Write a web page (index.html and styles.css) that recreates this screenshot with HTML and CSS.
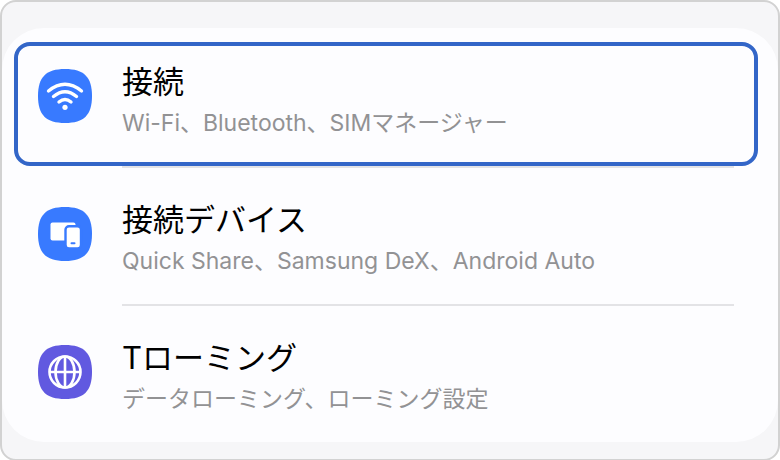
FILE: index.html
```html
<!DOCTYPE html>
<html lang="ja">
<head>
  <meta charset="UTF-8">
  <meta name="viewport" content="width=device-width, initial-scale=1.0">
  <title>設定</title>
  <link rel="stylesheet" href="styles.css">
</head>
<body>
  <main class="screen">
    <ul class="settings">
      <li class="selected">
        <a class="item" href="#connections">
          <svg class="icon" viewBox="0 0 54 54" aria-hidden="true">
            <path fill="#387aff" d="M27 0C46 0 54 8 54 27S46 54 27 54 0 46 0 27 8 0 27 0Z"/>
            <g fill="none" stroke="#fff" stroke-width="3.4" stroke-linecap="round">
              <path d="M10.5 22Q27 8.5 43.5 22"/>
              <path d="M15.5 27.5Q27 18 38.5 27.5"/>
              <path d="M21 33Q27 28 33 33"/>
            </g>
            <circle cx="27" cy="38.3" r="2.6" fill="#fff"/>
          </svg>
          <span class="text">
            <span class="title">接続</span>
            <span class="summary">Wi-Fi、Bluetooth、SIMマネージャー</span>
          </span>
        </a>
      </li>
      <li>
        <a class="item" href="#devices">
          <svg class="icon" viewBox="0 0 54 54" aria-hidden="true">
            <path fill="#387aff" d="M27 0C46 0 54 8 54 27S46 54 27 54 0 46 0 27 8 0 27 0Z"/>
            <rect x="12.5" y="15.5" width="25" height="18" rx="2" fill="#fff"/>
            <rect x="27.5" y="19.2" width="15.5" height="22.3" rx="3.5" fill="#fff" stroke="#387aff" stroke-width="2.4"/>
            <path d="M33.5 36.2h3" stroke="#387aff" stroke-width="2" stroke-linecap="round"/>
          </svg>
          <span class="text">
            <span class="title">接続デバイス</span>
            <span class="summary">Quick Share、Samsung DeX、Android Auto</span>
          </span>
        </a>
      </li>
      <li>
        <a class="item" href="#roaming">
          <svg class="icon" viewBox="0 0 54 54" aria-hidden="true">
            <path fill="#6159e0" d="M27 0C46 0 54 8 54 27S46 54 27 54 0 46 0 27 8 0 27 0Z"/>
            <g fill="none" stroke="#fff" stroke-width="2.6">
              <circle cx="27" cy="27" r="15.5"/>
              <ellipse cx="27" cy="27" rx="9.5" ry="15.5"/>
              <path d="M27 11.5v31M11.5 27h31"/>
            </g>
          </svg>
          <span class="text">
            <span class="title">Tローミング</span>
            <span class="summary">データローミング、ローミング設定</span>
          </span>
        </a>
      </li>
    </ul>
  </main>
</body>
</html>
```

FILE: styles.css
```css
* {
  box-sizing: border-box;
}
body {
  margin: 0;
  background: #fff;
  font-family: Inter, "Noto Sans CJK JP", sans-serif;
}
.screen {
  min-height: 100vh;
  padding: 26px 0 17px;
  background: #f6f6f8;
  border: 2px solid #d2d2d2;
  border-radius: 16px;
}
.settings {
  margin: 0;
  padding: 0;
  list-style: none;
  background: #fdfdff;
  border-radius: 42px;
}
.settings li {
  position: relative;
}
.item {
  display: flex;
  gap: 30px;
  min-height: 138px;
  padding: 33px 44px 20px 36px;
  color: #000;
  text-decoration: none;
}
/* divider lines up with the text, not the icon */
.settings li:not(:last-child)::after {
  content: "";
  position: absolute;
  left: 120px;
  right: 44px;
  bottom: -2px;
  height: 2px;
  background: #e3e3e6;
}
.selected::before {
  content: "";
  position: absolute;
  z-index: 1;
  inset: 14px 20px 0 12px;
  border: 4px solid #3366c8;
  border-radius: 16px;
}
.icon {
  flex: none;
  width: 54px;
  height: 54px;
  margin-top: 8px;
}
.text {
  display: flex;
  flex-direction: column;
}
.title {
  font-size: 31px;
  line-height: 42px;
}
.summary {
  font-size: 23px;
  line-height: 40px;
  color: #929294;
}
```
